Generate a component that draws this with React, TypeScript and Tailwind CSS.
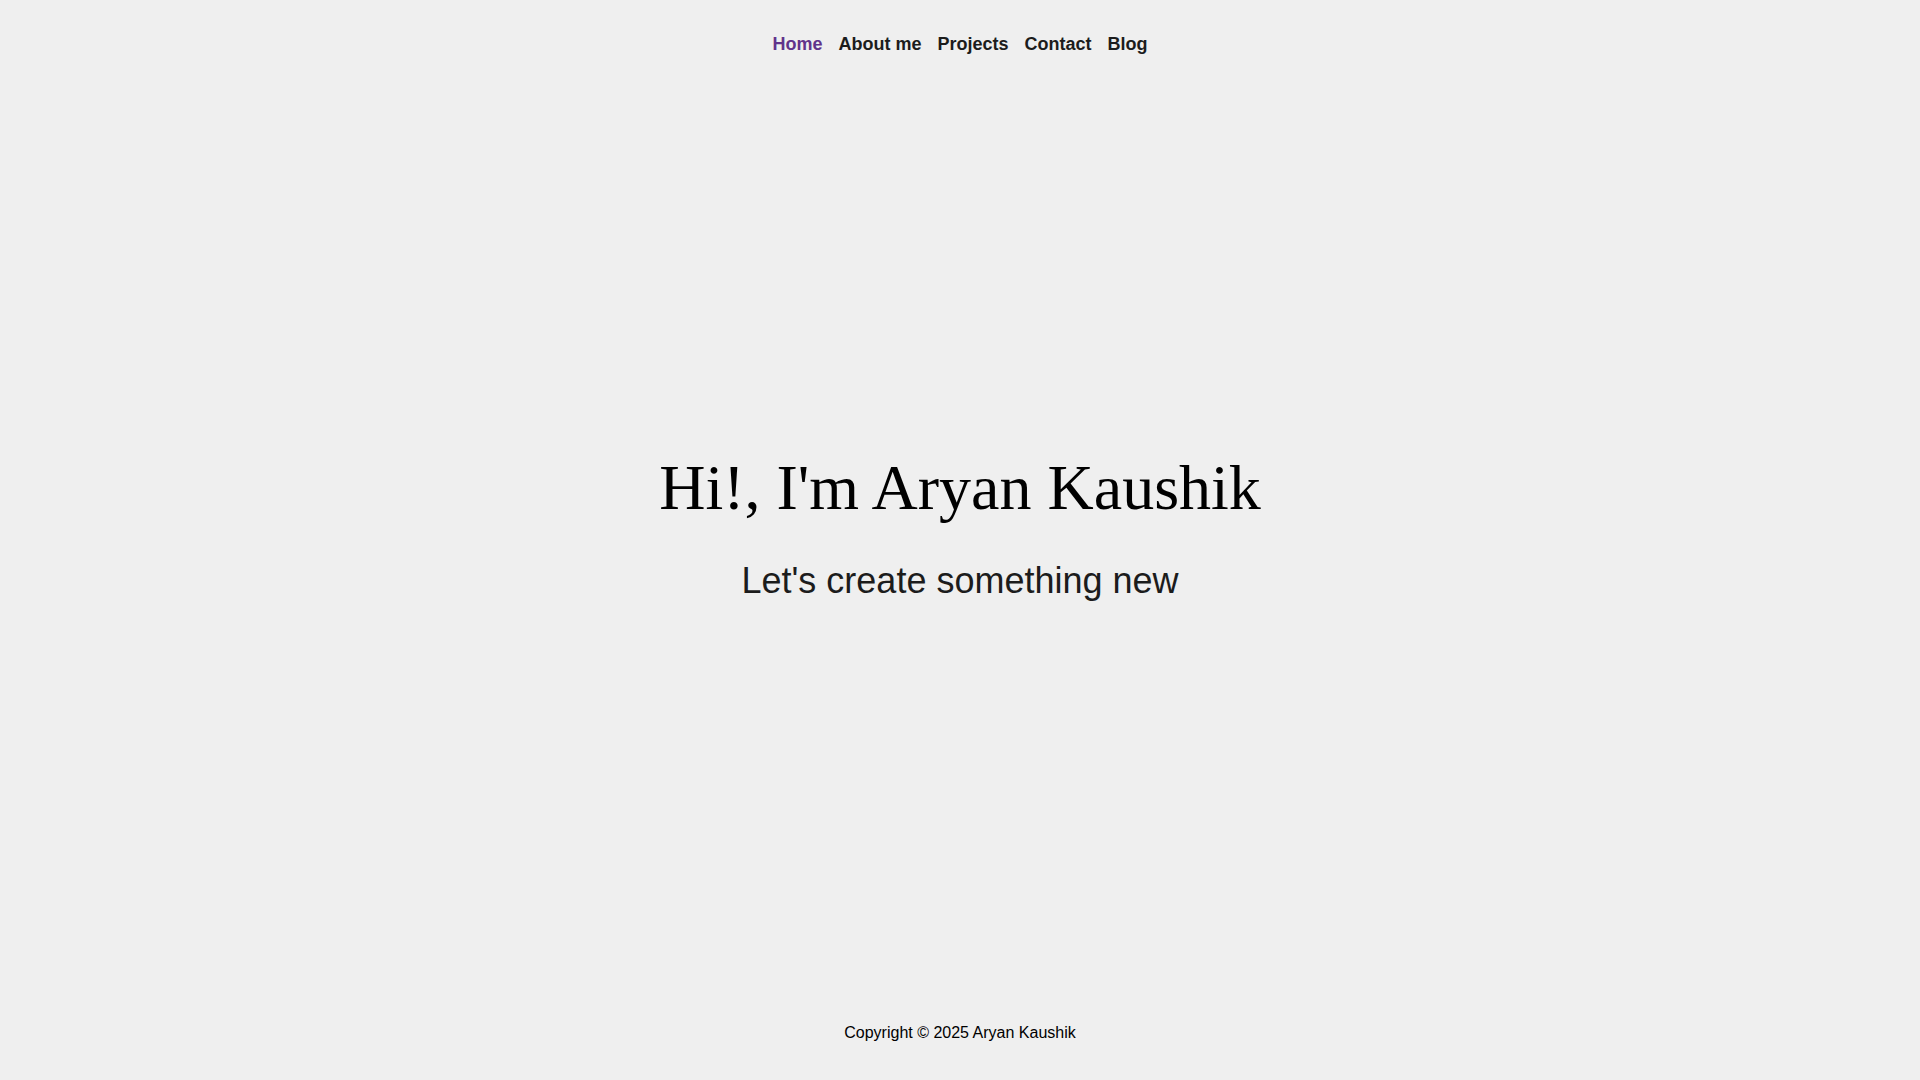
const links = [
  { label: "Home", href: "#home", current: true },
  { label: "About me", href: "#about", current: false },
  { label: "Projects", href: "#projects", current: false },
  { label: "Contact", href: "#contact", current: false },
  { label: "Blog", href: "#blog", current: false },
];

export default function App() {
  return (
    <div className="flex min-h-screen flex-col bg-[#efefef] font-['Liberation_Sans',Arial,sans-serif] text-black">
      <header className="px-4 py-8">
        <nav aria-label="Main">
          <ul className="flex flex-wrap justify-center gap-4 text-lg leading-6 font-bold">
            {links.map((link) => (
              <li key={link.label}>
                <a
                  href={link.href}
                  aria-current={link.current ? "page" : undefined}
                  className={link.current ? "text-[#61338b]" : "text-[#1c1c1c]"}
                >
                  {link.label}
                </a>
              </li>
            ))}
          </ul>
        </nav>
      </header>
      <main className="flex flex-1 flex-col items-center justify-center gap-9 px-4 pb-[22px] text-center">
        <h1 className="font-['Liberation_Serif',serif] text-[64px] leading-[74px]">Hi!, I'm Aryan Kaushik</h1>
        <p className="text-4xl text-[#1c1c1c]">Let's create something new</p>
      </main>
      <footer className="px-4 pt-9 pb-[35px] text-center text-base">Copyright © 2025 Aryan Kaushik</footer>
    </div>
  );
}
